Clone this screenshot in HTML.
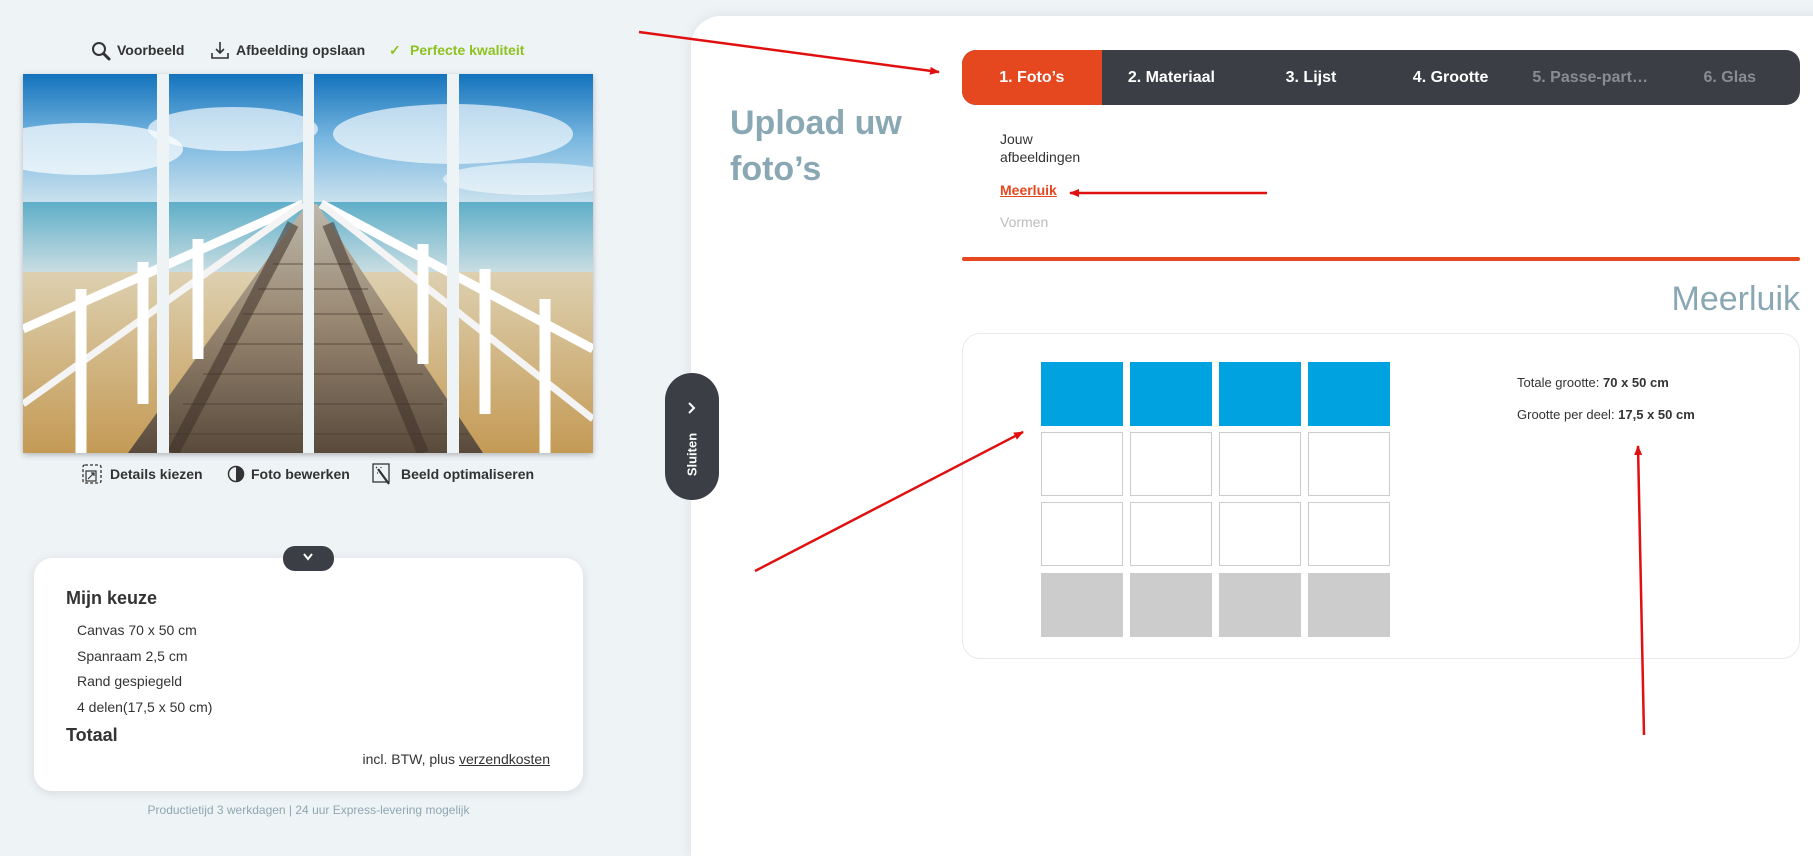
<!DOCTYPE html>
<html><head><meta charset="utf-8"><style>
*{margin:0;padding:0;box-sizing:border-box}
body{width:1813px;height:842px;overflow:hidden;background:#eef3f6;font-family:"Liberation Sans",sans-serif;color:#333;position:relative}
.abs{position:absolute}
.tb{font-size:14px;font-weight:bold;color:#333;white-space:nowrap}
.right{position:absolute;left:691px;top:16px;width:1140px;height:840px;background:#fff;border-top-left-radius:30px;box-shadow:0 0 14px rgba(0,0,0,.08)}
.steps{position:absolute;left:962px;top:50px;width:838px;height:55px;background:#3b3e45;border-radius:14px;overflow:hidden;display:flex}
.steps div{width:139.6px;text-align:center;line-height:55px;font-size:16px;font-weight:bold;color:#fff;white-space:nowrap}
.steps .on{background:#e5471f}
.steps .dim{color:#8a8c90}
.cell{position:absolute;width:82px;height:64px}
</style></head><body>

<svg class="abs" style="left:91px;top:41px" width="20" height="20" viewBox="0 0 20 20"><circle cx="8" cy="8" r="6" fill="none" stroke="#333" stroke-width="2"/><path d="M12.5 12.5 L18 18" stroke="#333" stroke-width="3" stroke-linecap="round"/></svg>
<div class="abs tb" style="left:117px;top:42px">Voorbeeld</div>
<svg class="abs" style="left:210px;top:40px" width="20" height="20" viewBox="0 0 20 20"><path d="M10 2 V13 M6 9 L10 13 L14 9" fill="none" stroke="#333" stroke-width="1.6"/><path d="M2 13 V18 H18 V13" fill="none" stroke="#333" stroke-width="1.6"/></svg>
<div class="abs tb" style="left:236px;top:42px">Afbeelding opslaan</div>
<div class="abs tb" style="left:389px;top:42px;color:#8dc21f">✓</div>
<div class="abs tb" style="left:410px;top:42px;color:#8dc21f">Perfecte kwaliteit</div>

<svg class="abs" style="left:23px;top:74px;filter:drop-shadow(0 2px 3px rgba(0,0,0,.25))" width="570" height="379" viewBox="0 0 570 379">
<defs>
<linearGradient id="sky" x1="0" y1="0" x2="0" y2="1"><stop offset="0" stop-color="#1473bd"/><stop offset=".5" stop-color="#7ab8e0"/><stop offset="1" stop-color="#cfe4ef"/></linearGradient>
<linearGradient id="sea" x1="0" y1="0" x2="0" y2="1"><stop offset="0" stop-color="#5eaec8"/><stop offset="1" stop-color="#c9dde2"/></linearGradient>
<linearGradient id="sand" x1="0" y1="0" x2="0" y2="1"><stop offset="0" stop-color="#ddd0b0"/><stop offset="1" stop-color="#c49a55"/></linearGradient>
<linearGradient id="wood" x1="0" y1="0" x2="0" y2="1"><stop offset="0" stop-color="#bdb7aa"/><stop offset=".45" stop-color="#9a8a74"/><stop offset="1" stop-color="#5a4a3c"/></linearGradient>
</defs>
<rect width="570" height="132" fill="url(#sky)"/>
<ellipse cx="60" cy="75" rx="100" ry="26" fill="#fff" opacity=".7"/>
<ellipse cx="210" cy="55" rx="85" ry="22" fill="#fff" opacity=".65"/>
<ellipse cx="430" cy="60" rx="120" ry="30" fill="#fff" opacity=".65"/>
<ellipse cx="510" cy="105" rx="90" ry="16" fill="#fff" opacity=".55"/>
<rect y="128" width="570" height="70" fill="url(#sea)"/>
<rect y="198" width="570" height="181" fill="url(#sand)"/>
<polygon points="284,130 294,130 460,379 105,379" fill="url(#wood)"/>
<g stroke="#4a3c30" stroke-width="1.2" opacity=".6">
<path d="M250 190 H330 M235 215 H345 M220 240 H360 M200 270 H380 M180 300 H400 M160 330 H420 M135 360 H445"/>
</g>
<path d="M270 150 L150 379 M305 150 L400 379" stroke="#3e3028" stroke-width="12" opacity=".55"/>
<path d="M280 130 L0 255 M298 130 L570 275" stroke="#fff" stroke-width="9"/>
<path d="M280 130 L0 330 M298 130 L570 345" stroke="#f4f4f4" stroke-width="7"/>
<path d="M58 215 V379 M522 225 V379 M120 188 V330 M462 195 V340 M175 165 V285 M400 170 V290" stroke="#fff" stroke-width="11"/>
<rect x="134" width="12" height="379" fill="#eef3f6"/>
<rect x="280" width="11" height="379" fill="#eef3f6"/>
<rect x="424" width="12" height="379" fill="#eef3f6"/>
</svg>

<svg class="abs" style="left:82px;top:464px" width="20" height="20" viewBox="0 0 20 20"><rect x="1" y="1" width="18" height="18" rx="2" fill="none" stroke="#333" stroke-width="1.3" stroke-dasharray="3 2"/><rect x="4" y="7" width="10" height="10" fill="none" stroke="#333" stroke-width="1.2"/><path d="M6 15 L12 9 M9 9 H12 V12" stroke="#333" stroke-width="1.2" fill="none"/></svg>
<div class="abs tb" style="left:110px;top:466px">Details kiezen</div>
<svg class="abs" style="left:227px;top:465px" width="18" height="18" viewBox="0 0 18 18"><circle cx="9" cy="9" r="7.5" fill="none" stroke="#333" stroke-width="1.5"/><path d="M9 1.5 A7.5 7.5 0 0 1 9 16.5 Z" fill="#333"/></svg>
<div class="abs tb" style="left:251px;top:466px">Foto bewerken</div>
<svg class="abs" style="left:372px;top:463px" width="20" height="22" viewBox="0 0 20 22"><rect x="1" y="1" width="16" height="18" fill="none" stroke="#333" stroke-width="1.3"/><path d="M6 6 L17 21" stroke="#333" stroke-width="2.2"/><path d="M5 10 l1 0 M9 4 l0 1 M4 4 l1 1" stroke="#333" stroke-width="1.3"/></svg>
<div class="abs tb" style="left:401px;top:466px">Beeld optimaliseren</div>

<div class="abs" style="left:34px;top:558px;width:549px;height:233px;background:#fff;border-radius:18px;box-shadow:0 2px 10px rgba(0,0,0,.1)"></div>
<div class="abs" style="left:283px;top:546px;width:51px;height:25px;background:#3b3e45;border-radius:12px"></div>
<svg class="abs" style="left:302px;top:552px" width="12" height="10" viewBox="0 0 12 10"><path d="M2 2 L6 7 L10 2" fill="none" stroke="#fff" stroke-width="2"/></svg>
<div class="abs" style="left:66px;top:588px;font-size:18px;font-weight:bold">Mijn keuze</div>
<div class="abs" style="left:77px;top:618px;font-size:14px;line-height:25.5px">Canvas 70 x 50 cm<br>Spanraam 2,5 cm<br>Rand gespiegeld<br>4 delen(17,5 x 50 cm)</div>
<div class="abs" style="left:66px;top:725px;font-size:18px;font-weight:bold">Totaal</div>
<div class="abs" style="left:300px;width:250px;text-align:right;top:751px;font-size:14px">incl. BTW, plus <u>verzendkosten</u></div>
<div class="abs" style="left:34px;width:549px;text-align:center;top:803px;font-size:12px;color:#8fa7b0">Productietijd 3 werkdagen | 24 uur Express-levering mogelijk</div>

<div class="right"></div>
<div class="abs" style="left:665px;top:373px;width:54px;height:127px;background:#3b3e45;border-radius:27px"></div>
<svg class="abs" style="left:686px;top:401px" width="12" height="14" viewBox="0 0 12 14"><path d="M3 2 L8 7 L3 12" fill="none" stroke="#fff" stroke-width="2"/></svg>
<div class="abs" style="left:662px;top:447px;width:60px;text-align:center;transform:rotate(-90deg);color:#fff;font-weight:bold;font-size:13px">Sluiten</div>

<div class="abs" style="left:730px;top:100px;font-size:34px;font-weight:bold;color:#8aa8b4;line-height:46px">Upload uw<br>foto’s</div>

<div class="steps"><div class="on">1. Foto’s</div><div>2. Materiaal</div><div>3. Lijst</div><div>4. Grootte</div><div class="dim">5. Passe-part…</div><div class="dim">6. Glas</div></div>

<div class="abs" style="left:1000px;top:130px;font-size:14px;line-height:18px;color:#333">Jouw<br>afbeeldingen</div>
<div class="abs" style="left:1000px;top:182px;font-size:14px;font-weight:bold;color:#e5471f;text-decoration:underline">Meerluik</div>
<div class="abs" style="left:1000px;top:214px;font-size:14px;color:#bbb">Vormen</div>
<div class="abs" style="left:962px;top:257px;width:838px;height:4px;background:#e5471f;border-radius:2px"></div>
<div class="abs" style="left:1500px;width:300px;text-align:right;top:280px;font-size:34px;color:#8aa8b4">Meerluik</div>

<div class="abs" style="left:962px;top:333px;width:838px;height:326px;border:1px solid #eaeaea;border-radius:18px"></div>
<div class="cell" style="left:1041px;top:362px;background:#00a3e0"></div>
<div class="cell" style="left:1130px;top:362px;background:#00a3e0"></div>
<div class="cell" style="left:1219px;top:362px;background:#00a3e0"></div>
<div class="cell" style="left:1308px;top:362px;background:#00a3e0"></div>
<div class="cell" style="left:1041px;top:432px;border:1px solid #ccc"></div>
<div class="cell" style="left:1130px;top:432px;border:1px solid #ccc"></div>
<div class="cell" style="left:1219px;top:432px;border:1px solid #ccc"></div>
<div class="cell" style="left:1308px;top:432px;border:1px solid #ccc"></div>
<div class="cell" style="left:1041px;top:502px;border:1px solid #ccc"></div>
<div class="cell" style="left:1130px;top:502px;border:1px solid #ccc"></div>
<div class="cell" style="left:1219px;top:502px;border:1px solid #ccc"></div>
<div class="cell" style="left:1308px;top:502px;border:1px solid #ccc"></div>
<div class="cell" style="left:1041px;top:573px;background:#ccc"></div>
<div class="cell" style="left:1130px;top:573px;background:#ccc"></div>
<div class="cell" style="left:1219px;top:573px;background:#ccc"></div>
<div class="cell" style="left:1308px;top:573px;background:#ccc"></div>
<div class="abs" style="left:1517px;top:375px;font-size:13px;color:#333">Totale grootte: <b>70 x 50 cm</b></div>
<div class="abs" style="left:1517px;top:407px;font-size:13px;color:#333">Grootte per deel: <b>17,5 x 50 cm</b></div>

<svg class="abs" style="left:0;top:0" width="1813" height="842">
<defs><marker id="ah" markerWidth="10" markerHeight="8" refX="9" refY="4" orient="auto" markerUnits="userSpaceOnUse"><path d="M0 0 L10 4 L0 8 Z" fill="#e01010"/></marker></defs>
<g stroke="#e01010" stroke-width="2.5" fill="none" marker-end="url(#ah)">
<line x1="639" y1="32" x2="939" y2="72"/>
<line x1="1267" y1="193" x2="1070" y2="193"/>
<line x1="755" y1="571" x2="1023" y2="432"/>
<line x1="1644" y1="735" x2="1638" y2="446"/>
</g></svg>
</body></html>
